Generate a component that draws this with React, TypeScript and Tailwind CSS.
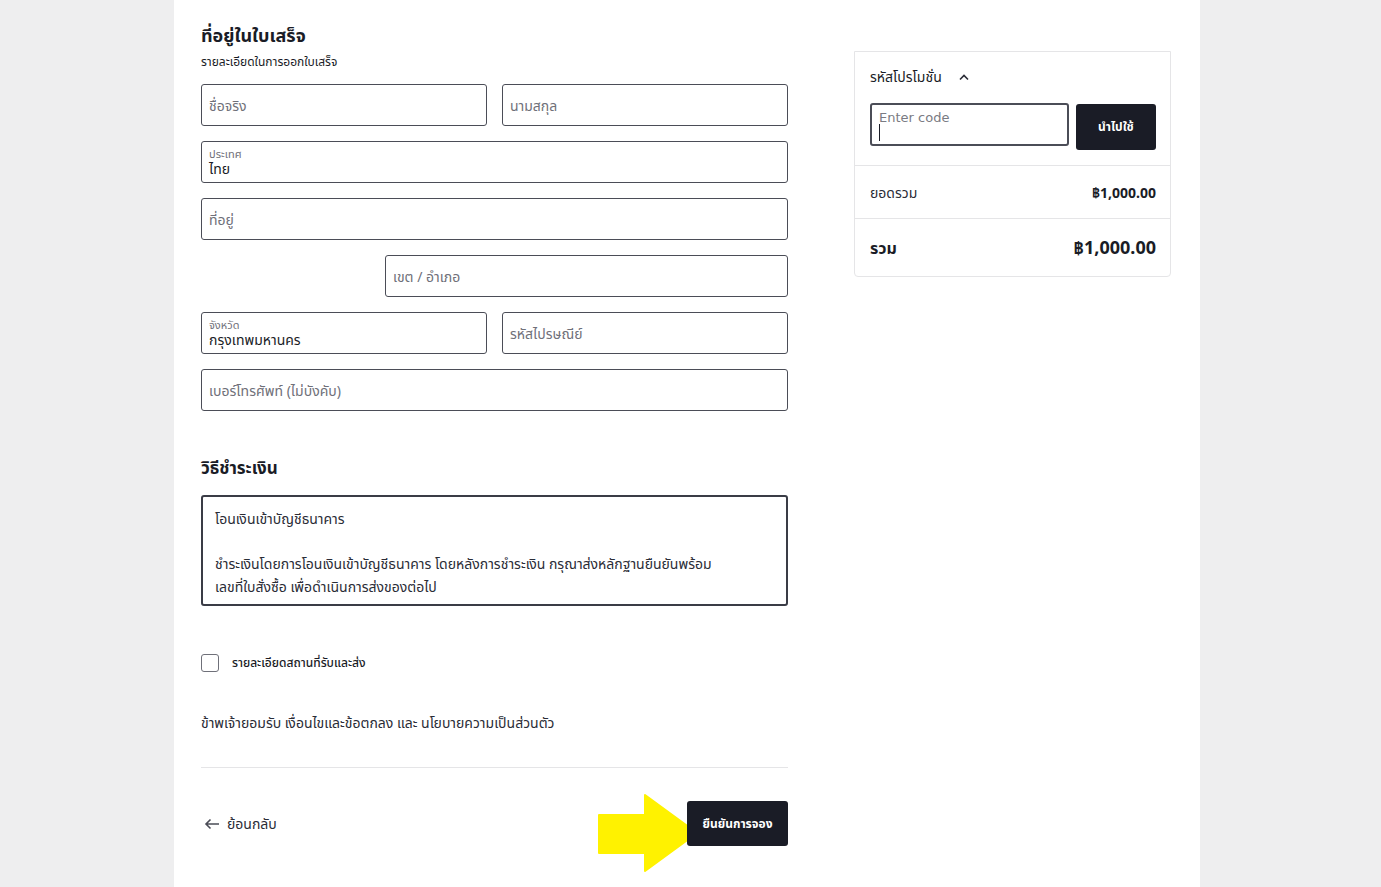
import React from "react";

function Field({ placeholder, className = "" }: { placeholder: string; className?: string }) {
  return (
    <div className={`h-[42px] border border-[#4b4d57] rounded-[3px] flex items-center px-[7px] ${className}`}>
      <span className="text-[14px] text-[#6f7079]">{placeholder}</span>
    </div>
  );
}

function LabeledField({ label, value, className = "" }: { label: string; value: string; className?: string }) {
  return (
    <div className={`h-[42px] border border-[#4b4d57] rounded-[3px] flex flex-col justify-center px-[7px] ${className}`}>
      <span className="text-[11px] leading-[14px] text-[#6f7079]">{label}</span>
      <span className="text-[14px] leading-[16px] text-[#1a1c26]">{value}</span>
    </div>
  );
}

export default function App() {
  return (
    <div
      className="bg-[#eeeeef] min-h-[887px] w-full"
      style={{ fontFamily: '"Noto Sans", "Noto Sans Thai", "Liberation Sans", sans-serif' }}
    >
      <div className="ml-[174px] w-[1026px] min-h-[887px] bg-white px-[27px] pt-[22px] flex gap-[66px] text-[#1a1c26]">
        {/* left column */}
        <div className="w-[587px] flex flex-col">
          <h1 className="text-[18px] leading-[26px] font-bold">ที่อยู่ในใบเสร็จ</h1>
          <p className="text-[12px] leading-[16px] mt-[6px]">รายละเอียดในการออกใบเสร็จ</p>

          <div className="flex flex-col gap-[15px] mt-[14px]">
            <div className="grid grid-cols-2 gap-[15px]">
              <Field placeholder="ชื่อจริง" />
              <Field placeholder="นามสกุล" />
            </div>
            <LabeledField label="ประเทศ" value="ไทย" />
            <Field placeholder="ที่อยู่" />
            <div className="flex justify-end">
              <Field placeholder="เขต / อำเภอ" className="w-[403px]" />
            </div>
            <div className="grid grid-cols-2 gap-[15px]">
              <LabeledField label="จังหวัด" value="กรุงเทพมหานคร" />
              <Field placeholder="รหัสไปรษณีย์" />
            </div>
            <Field placeholder="เบอร์โทรศัพท์ (ไม่บังคับ)" />
          </div>

          <h2 className="text-[17px] leading-[24px] font-bold mt-[45px]">วิธีชำระเงิน</h2>
          <div className="mt-[15px] border-2 border-[#3a3c46] rounded-[3px] px-[12px] pt-[10px] pb-[6px] text-[14px] leading-[23px] text-[#2a2c36]">
            <p>โอนเงินเข้าบัญชีธนาคาร</p>
            <p className="mt-[22px]">
              ชำระเงินโดยการโอนเงินเข้าบัญชีธนาคาร โดยหลังการชำระเงิน กรุณาส่งหลักฐานยืนยันพร้อม
              <br />
              เลขที่ใบสั่งซื้อ เพื่อดำเนินการส่งของต่อไป
            </p>
          </div>

          <label className="flex items-center gap-[13px] mt-[48px]">
            <span className="w-[18px] h-[18px] border border-[#6f7079] rounded-[3px] bg-white" />
            <span className="text-[12px] font-medium text-[#1a1c26]">รายละเอียดสถานที่รับและส่ง</span>
          </label>

          <p className="text-[14px] leading-[20px] mt-[41px] text-[#2a2c36]">
            ข้าพเจ้ายอมรับ เงื่อนไขและข้อตกลง และ นโยบายความเป็นส่วนตัว
          </p>

          <div className="h-px bg-[#e5e5e7] mt-[34px]" />

          <div className="flex items-center justify-between mt-[33px]">
            <div className="flex items-center gap-[7px] pl-[3px] text-[14px] text-[#2a2c36]">
              <svg width="16" height="12" viewBox="0 0 16 12" fill="none" stroke="#4b4d57" strokeWidth="1.6">
                <path d="M15 6H2M6.5 1.5L2 6l4.5 4.5" />
              </svg>
              <span>ย้อนกลับ</span>
            </div>
            <div className="relative">
              <svg
                className="absolute left-[-89px] top-[-7px]"
                width="102"
                height="78"
                viewBox="0 0 102 78"
              >
                <path
                  d="M1 21 L47 21 L47 1 L99 39 L47 77 L47 59 L1 59 Z"
                  fill="#fff200"
                  stroke="#fff200"
                  strokeWidth="2"
                  strokeLinejoin="round"
                />
              </svg>
              <button className="relative w-[101px] h-[45px] bg-[#1a1c26] rounded-[3px] text-white text-[12px] font-bold">
                ยืนยันการจอง
              </button>
            </div>
          </div>
        </div>

        {/* right column */}
        <div className="w-[317px] pt-[29px]">
          <div className="border border-[#e5e5e7] rounded-b-[4px]">
            <div className="pl-[15px] pr-[14px] pt-[14px] pb-[15px]">
              <div className="flex items-center gap-[16px] text-[14px] text-[#1a1c26]">
                <span>รหัสโปรโมชั่น</span>
                <svg width="12" height="8" viewBox="0 0 12 8" fill="none" stroke="#2a2c36" strokeWidth="1.6">
                  <path d="M2 6.5L6 2.5l4 4" />
                </svg>
              </div>
              <div className="flex gap-[7px] mt-[16px] items-start">
                <div className="w-[200px] h-[43px] border-2 border-[#4b4d57] rounded-[3px] px-[7px] pt-[4px]">
                  <div className="text-[13px] leading-[17px] text-[#7a7b83]" style={{ fontFamily: '"DejaVu Sans", sans-serif' }}>Enter code</div>
                  <div className="w-px h-[17px] bg-[#1a1c26] -mt-[2px]" />
                </div>
                <button className="w-[81px] h-[46px] bg-[#1a1c26] rounded-[3px] text-white text-[12px] font-bold mt-px">
                  นำไปใช้
                </button>
              </div>
            </div>
            <div className="border-t border-[#e5e5e7] h-[53px] pl-[15px] pr-[14px] flex items-center justify-between">
              <span className="text-[14px] text-[#2a2c36]">ยอดรวม</span>
              <span className="text-[14px] font-bold text-[#1a1c26]">฿1,000.00</span>
            </div>
            <div className="border-t border-[#e5e5e7] h-[58px] pl-[15px] pr-[14px] flex items-center justify-between">
              <span className="text-[16px] font-bold text-[#1a1c26]">รวม</span>
              <span className="text-[18px] font-bold text-[#1a1c26]">฿1,000.00</span>
            </div>
          </div>
        </div>
      </div>
    </div>
  );
}
